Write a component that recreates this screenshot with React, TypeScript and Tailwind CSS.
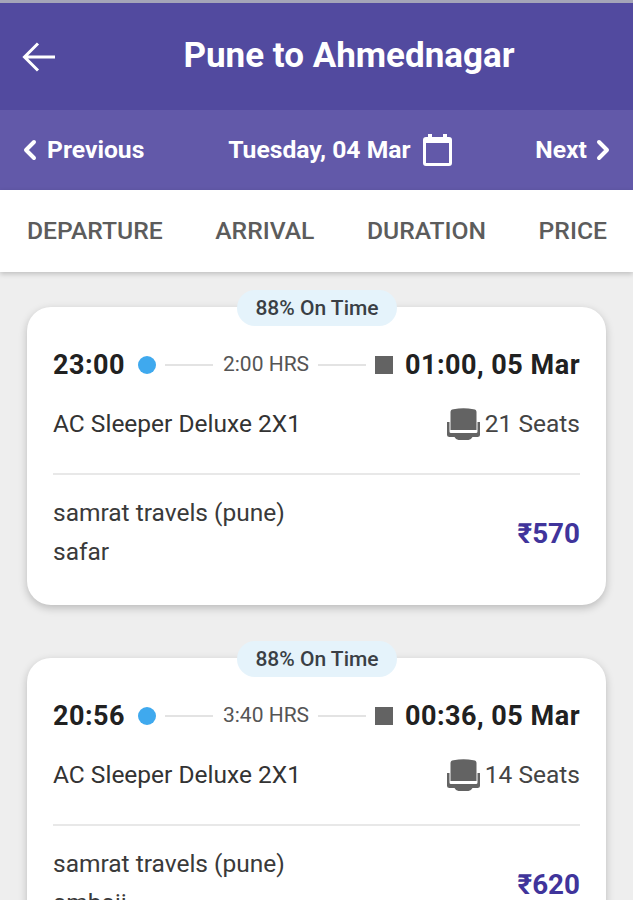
import { ChevronLeft, ChevronRight } from 'lucide-react'

const TABS = ['DEPARTURE', 'ARRIVAL', 'DURATION', 'PRICE']

const TRIPS = [
  { dep: '23:00', hrs: '2:00 HRS', arr: '01:00, 05 Mar', seats: '21 Seats', name: 'safar', price: '₹570' },
  { dep: '20:56', hrs: '3:40 HRS', arr: '00:36, 05 Mar', seats: '14 Seats', name: 'ambaji', price: '₹620' },
]

function BackArrow() {
  return (
    <svg width="34" height="30" viewBox="0 0 34 30" fill="none" stroke="#fff" strokeWidth="3" className="flex-shrink-0 ml-[22px]">
      <path d="M33 15H3M16 1.500L2.500 15L16 28.500" />
    </svg>
  )
}

function CalendarIcon() {
  return (
    <svg width="29" height="32" viewBox="0 0 29 32" className="flex-shrink-0">
      <path d="M5 0h4v3h11V0h4v3h2a3 3 0 0 1 3 3v23a3 3 0 0 1-3 3H3a3 3 0 0 1-3-3V6a3 3 0 0 1 3-3h2z" fill="#fff" />
      <rect x="3" y="9" width="23" height="20" fill="#6259a9" />
    </svg>
  )
}

function SeatIcon() {
  return (
    <svg width="33" height="32" viewBox="0 0 33 32" className="flex-shrink-0">
      <path d="M3.500 4Q3.500 1.500 6.500 1.200q10-1.800 20 0q3 .3 3 2.800V22H3.500z" fill="#636363" />
      <path d="M0 14h2.500v9.500q0 1.500 1.500 1.500h25q1.500 0 1.500-1.500V14H33v13q0 2-2.500 2h-5q-1.500 3-4 3h-10q-2.500 0-4-3h-5Q0 29 0 27z" fill="#636363" />
    </svg>
  )
}

function TripCard({ trip }: { trip: (typeof TRIPS)[number] }) {
  return (
    <div className="relative bg-white rounded-[24px] h-[298px] pl-[26px] pr-[26px] pt-[40px] shadow-[0_3px_8px_rgba(0,0,0,0.22)]">
      <div className="absolute top-[-17px] left-[210px] w-[160px] h-[36px] pt-[1px] rounded-[18px] bg-[#e5f3fb] flex items-center justify-center text-[21px] font-medium text-[#3a3f45]">
        88% On Time
      </div>

      <div className="flex items-center h-[36px]">
        <span className="text-[27px] font-bold text-[#212121] tracking-[0.5px]">{trip.dep}</span>
        <span className="w-[18px] h-[18px] rounded-full bg-[#3fa9ee] ml-[13px] flex-shrink-0" />
        <span className="flex-1 h-[2px] bg-[#e3e3e3] ml-[9px]" />
        <span className="text-[21px] text-[#555] ml-[10px] mr-[9px]">{trip.hrs}</span>
        <span className="flex-1 h-[2px] bg-[#e3e3e3]" />
        <span className="w-[18px] h-[18px] bg-[#636363] ml-[9px] flex-shrink-0" />
        <span className="text-[27px] font-bold text-[#212121] ml-[12px] tracking-[0.5px]">{trip.arr}</span>
      </div>

      <div className="flex items-center justify-between h-[36px] mt-[23px]">
        <span className="text-[24.5px] text-[#333]">AC Sleeper Deluxe 2X1</span>
        <div className="flex items-center gap-[5px]">
          <SeatIcon />
          <span className="text-[24.5px] text-[#444]">{trip.seats}</span>
        </div>
      </div>

      <div className="h-[2px] bg-[#e8e8e8] mt-[31px]" />

      <div className="flex items-center justify-between mt-[18px]">
        <div className="text-[24.5px] text-[#3a3a3a] leading-[39px]">
          <div>samrat travels (pune)</div>
          <div>{trip.name}</div>
        </div>
        <span className="pt-[4px] text-[27.8px] font-bold text-[#40349b]">{trip.price}</span>
      </div>
    </div>
  )
}

export default function App() {
  return (
    <div className="h-[900px] overflow-hidden bg-[#eeeeee] font-['Roboto',sans-serif]">
      <div className="h-[3px] bg-[#a5a5b8]" />

      <header className="h-[107px] bg-[#524a9f] flex items-center relative">
        <BackArrow />
        <h1 className="absolute inset-x-0 text-center pl-[65px] text-[35px] font-bold text-white">Pune to Ahmednagar</h1>
      </header>

      <div className="h-[80px] bg-[#6259a9] flex items-center justify-between pl-[14px] pr-[14px] text-white text-[24.7px] font-bold">
        <div className="flex items-center gap-[1px]">
          <ChevronLeft size={32} strokeWidth={3} />
          <span>Previous</span>
        </div>
        <div className="flex items-center gap-[12px]">
          <span>Tuesday, 04 Mar</span>
          <CalendarIcon />
        </div>
        <div className="flex items-center">
          <span>Next</span>
          <ChevronRight size={32} strokeWidth={3} />
        </div>
      </div>

      <nav className="relative h-[82px] bg-white flex items-center justify-between pl-[27px] pr-[26px] shadow-[0_2px_5px_rgba(0,0,0,0.2)]">
        {TABS.map((tab) => (
          <span key={tab} className="text-[24.7px] font-medium text-[#5c5c5c]">{tab}</span>
        ))}
      </nav>

      <main className="px-[27px] pt-[35px] flex flex-col gap-[53px]">
        {TRIPS.map((trip) => (
          <TripCard key={trip.dep} trip={trip} />
        ))}
      </main>
    </div>
  )
}
